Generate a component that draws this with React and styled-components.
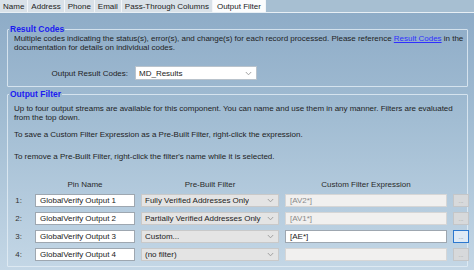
import React from "react";
import styled, { createGlobalStyle } from "styled-components";

const GlobalStyle = createGlobalStyle`
  html, body {
    margin: 0;
    padding: 0;
    overflow: hidden;
  }
  body {
    font-family: "Liberation Sans", Arial, sans-serif;
    font-size: 8px;
    color: #1e1e1e;
  }
`;

const Window = styled.div`
  width: 474px;
  height: 270px;
  display: flex;
  flex-direction: column;
  background: linear-gradient(180deg, #8caac6 0%, #a2bdd3 45%, #c4d7e6 100%);
  overflow: hidden;
`;

const TabStrip = styled.div`
  height: 12px;
  display: flex;
  align-items: stretch;
  background: #a7bfd2;
  border-bottom: 1px solid #e8eff5;
`;

const Tab = styled.div`
  display: flex;
  align-items: center;
  padding: 0 ${(p) => (p.$active ? "4px" : "3px")};
  background: ${(p) => (p.$active ? "#fbfcfd" : "#d9e1e8")};
  border-right: 1px solid #f2f5f8;
  color: #222;
  font-size: 8px;
  white-space: nowrap;
`;

const Panel = styled.div`
  flex: 1;
  display: flex;
  flex-direction: column;
  padding: 11px 6px 0 7px;
  gap: 2px;
`;

const Group = styled.fieldset`
  margin: 0;
  padding: 0;
  border: 1px solid rgba(228, 237, 245, 0.8);
  border-radius: 1px;
  min-width: 0;
`;

const Legend = styled.legend`
  margin-left: 1px;
  padding: 0 1px;
  color: #1c1cf0;
  font-weight: bold;
  font-size: 8.5px;
  line-height: 10px;
`;

const Para = styled.p`
  margin: ${(p) => p.$gap || 0}px 0 0 0;
  padding: 0 0 0 6px;
  line-height: 9px;
  font-size: 8px;
  letter-spacing: -0.02px;
`;

const Link = styled.a`
  color: #2f2fff;
  text-decoration: underline;
`;

const CodesRow = styled.div`
  display: flex;
  align-items: center;
  gap: 7px;
  padding: 14px 0 6px 0;
`;

const CodesLabel = styled.span`
  width: 120px;
  text-align: right;
`;

const SelectBox = styled.div`
  width: ${(p) => p.$w || 122}px;
  height: ${(p) => p.$h || 14}px;
  box-sizing: border-box;
  display: flex;
  align-items: center;
  justify-content: space-between;
  padding: 0 4px 0 3px;
  background: ${(p) => (p.$disabled ? "#e4e4e4" : "#ffffff")};
  border: 1px solid ${(p) => (p.$disabled ? "#c9c9c9" : "#b9c3cc")};
  color: #222;
  white-space: nowrap;
  overflow: hidden;
`;

const SelectText = styled.span`
  overflow: hidden;
  text-overflow: clip;
`;

const FilterGrid = styled.div`
  display: grid;
  grid-template-columns: 21px 100px 138px 162px 16px;
  column-gap: 6px;
  row-gap: 5px;
  align-items: center;
  padding: 20px 0 5px 0;
`;

const Head = styled.div`
  text-align: center;
  color: #2a2a2a;
  line-height: 8px;
`;

const RowNum = styled.div`
  text-align: right;
  padding-right: 7px;
  color: #333;
`;

const TextBox = styled.div`
  height: 13px;
  box-sizing: border-box;
  display: flex;
  align-items: center;
  padding: 0 4px;
  background: ${(p) => (p.$disabled ? "#f1f0ef" : "#ffffff")};
  border: 1px solid ${(p) => (p.$disabled ? "#d6d6d6" : "#9ea7b0")};
  color: ${(p) => (p.$disabled ? "#8a8a8a" : "#222")};
  white-space: nowrap;
  overflow: hidden;
`;

const DotsButton = styled.div`
  height: 13px;
  box-sizing: border-box;
  display: flex;
  align-items: flex-end;
  justify-content: center;
  padding-bottom: 2px;
  background: ${(p) => (p.$focus ? "#dfeaf5" : "#d7d9db")};
  border: 1px solid ${(p) => (p.$focus ? "#2c78cf" : "#c4c6c8")};
  color: ${(p) => (p.$focus ? "#6a7a8a" : "#9a9a9a")};
  font-size: 6px;
  line-height: 6px;
`;

const Chevron = () => (
  <svg width="7" height="5" viewBox="0 0 7 5">
    <path d="M0.8 1 L3.5 3.8 L6.2 1" fill="none" stroke="#9a9a9a" strokeWidth="0.9" />
  </svg>
);

const tabs = ["Name", "Address", "Phone", "Email", "Pass-Through Columns", "Output Filter"];

const rows = [
  { pin: "GlobalVerify Output 1", filter: "Fully Verified Addresses Only", expr: "[AV2*]", enabled: false },
  { pin: "GlobalVerify Output 2", filter: "Partially Verified Addresses Only", expr: "[AV1*]", enabled: false },
  { pin: "GlobalVerify Output 3", filter: "Custom...", expr: "[AE*]", enabled: true },
  { pin: "GlobalVerify Output 4", filter: "(no filter)", expr: "", enabled: false },
];

const App = () => {
  return (
    <>
      <GlobalStyle />
      <Window>
        <TabStrip>
          {tabs.map((t) => (
            <Tab key={t} $active={t === "Output Filter"}>
              {t}
            </Tab>
          ))}
        </TabStrip>
        <Panel>
          <Group>
            <Legend>Result Codes</Legend>
            <Para>
              Multiple codes indicating the status(s), error(s), and change(s) for each record
              processed. Please reference <Link>Result Codes</Link> in the documentation for
              details on individual codes.
            </Para>
            <CodesRow>
              <CodesLabel>Output Result Codes:</CodesLabel>
              <SelectBox>
                <SelectText>MD_Results</SelectText>
                <Chevron />
              </SelectBox>
            </CodesRow>
          </Group>
          <Group>
            <Legend>Output Filter</Legend>
            <Para $gap={5}>
              Up to four output streams are available for this component. You can name and use
              them in any manner. Filters are evaluated from the top down.
            </Para>
            <Para $gap={8}>
              To save a Custom Filter Expression as a Pre-Built Filter, right-click the expression.
            </Para>
            <Para $gap={13}>
              To remove a Pre-Built Filter, right-click the filter's name while it is selected.
            </Para>
            <FilterGrid>
              <span />
              <Head>Pin Name</Head>
              <Head>Pre-Built Filter</Head>
              <Head>Custom Filter Expression</Head>
              <span />
              {rows.map((r, i) => (
                <React.Fragment key={r.pin}>
                  <RowNum>{i + 1}:</RowNum>
                  <TextBox>{r.pin}</TextBox>
                  <SelectBox $w={138} $h={13} $disabled>
                    <SelectText>{r.filter}</SelectText>
                    <Chevron />
                  </SelectBox>
                  <TextBox $disabled={!r.enabled}>{r.expr}</TextBox>
                  <DotsButton $focus={r.enabled}>...</DotsButton>
                </React.Fragment>
              ))}
            </FilterGrid>
          </Group>
        </Panel>
      </Window>
    </>
  );
};

export default App;
